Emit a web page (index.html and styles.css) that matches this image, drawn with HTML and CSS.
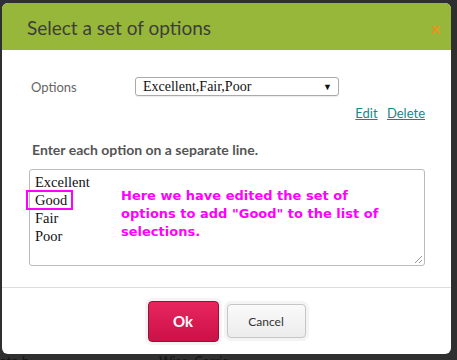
FILE: index.html
```html
<!DOCTYPE html>
<html lang="en">
<head>
    <meta charset="UTF-8">
    <title>Select a set of options</title>
    <link rel="stylesheet" href="styles.css">
</head>
<body>
    <div class="modal">
        <div class="modal-header">
            <h3>Select a set of options</h3>
            <span class="close">&times;</span>
        </div>

        <div class="modal-body">
            <div class="row">
                <label class="row-label">Options</label>
                <div class="select">
                    <span>Excellent,Fair,Poor</span>
                    <span class="arrow">&#9660;</span>
                </div>
            </div>
            <div class="links">
                <a href="#">Edit</a>
                <a href="#">Delete</a>
            </div>

            <p class="hint">Enter each option on a separate line.</p>

            <div class="textarea">
                <div class="lines">
                    <div>Excellent</div>
                    <div><span class="marked">Good</span></div>
                    <div>Fair</div>
                    <div>Poor</div>
                </div>
                <div class="note">Here we have edited the set of options to add "Good" to the list of selections.</div>
                <span class="grip"></span>
            </div>
        </div>

        <div class="modal-footer">
            <span class="btn-ring"><button class="btn btn-ok">Ok</button></span>
            <span class="btn-ring"><button class="btn btn-cancel">Cancel</button></span>
        </div>
    </div>

    <div class="page-row">
        <span>ato b</span>
        <span class="second">Wise, Carrie</span>
    </div>
</body>
</html>
```

FILE: styles.css
```css
body {
    margin: 0;
    background: #2f2f2f;
    font-family: Lato, "Open Sans", Arial, sans-serif;
    overflow: hidden;
}

.modal {
    margin: 3px 0 0 2px;
    width: 449px;
    height: 351px;
    background: #fff;
    border-radius: 6px;
    overflow: hidden;
    display: flex;
    flex-direction: column;
}

/* Header */
.modal-header {
    height: 47px;
    background: #97b73a;
    display: flex;
    align-items: center;
    justify-content: space-between;
    padding: 0 10px 0 25px;
}
.modal-header h3 {
    margin: 2px 0 0 0;
    font-size: 19px;
    font-weight: normal;
    color: #3d3d3d;
}
.close {
    color: #f0901a;
    font-size: 18px;
    font-weight: bold;
    margin-top: 5px;
}

/* Body */
.modal-body {
    padding: 27px 26px 0 27px;
    flex: 1;
}
.row {
    display: flex;
    align-items: center;
}
.row-label {
    width: 104px;
    padding-left: 2px;
    font-size: 13px;
    color: #666;
}
.select {
    width: 189px;
    height: 17px;
    border: 1px solid #aaa;
    border-radius: 3px;
    padding: 0 6px 0 7px;
    display: flex;
    align-items: center;
    justify-content: space-between;
    font-family: "Liberation Serif", serif;
    font-size: 14px;
    color: #111;
    box-shadow: 0 1px 1px rgba(0, 0, 0, 0.08);
}
.select .arrow {
    font-size: 9px;
}
.links {
    text-align: right;
    margin-top: 9px;
    font-size: 13px;
}
.links a {
    color: #1a8585;
    margin-left: 6px;
}
.hint {
    margin: 20px 0 0 3px;
    font-size: 14px;
    font-weight: bold;
    color: #555;
}
.textarea {
    position: relative;
    margin-top: 11px;
    height: 92px;
    border: 1px solid #bbb;
    border-radius: 3px;
    display: flex;
    padding: 3px 0 0 5px;
}
.lines {
    font-family: "Liberation Serif", serif;
    font-size: 14.5px;
    line-height: 18px;
    color: #111;
    width: 86px;
}
.marked {
    display: inline-block;
    margin-left: -8px;
    padding: 0 5px 0 8px;
    line-height: 18px;
    outline: 2px solid #ff00ff;
    outline-offset: -1px;
}
.note {
    margin-top: 14px;
    width: 262px;
    font-family: "DejaVu Sans", Verdana, sans-serif;
    font-weight: bold;
    font-size: 13px;
    line-height: 18px;
    color: #ff00ff;
}
.grip {
    position: absolute;
    right: 2px;
    bottom: 2px;
    width: 7px;
    height: 7px;
    background: linear-gradient(135deg, transparent 45%, #999 45%, #999 55%, transparent 55%, transparent 75%, #999 75%, #999 85%, transparent 85%);
}

/* Footer */
.modal-footer {
    border-top: 1px solid #ddd;
    height: 66px;
    display: flex;
    justify-content: center;
    align-items: center;
    gap: 2px;
}
.btn-ring {
    padding: 3px;
    border-radius: 7px;
    background: #f4f4f4;
    display: flex;
}
.btn {
    border-radius: 4px;
    font-family: inherit;
    cursor: pointer;
}
.btn-ok {
    width: 71px;
    height: 41px;
    border: 1px solid #8a1738;
    background: linear-gradient(#e8265e, #cc1048);
    color: #fff;
    font-size: 15px;
    font-weight: bold;
}
.btn-cancel {
    width: 79px;
    height: 34px;
    border: 1px solid #c6c6c6;
    background: linear-gradient(#fafafa, #ececec);
    color: #333;
    font-size: 12px;
}

/* page behind the modal */
.page-row {
    margin-top: -1px;
    font-size: 13px;
    color: #151515;
    display: flex;
}
.page-row .second {
    margin-left: 130px;
}
```
